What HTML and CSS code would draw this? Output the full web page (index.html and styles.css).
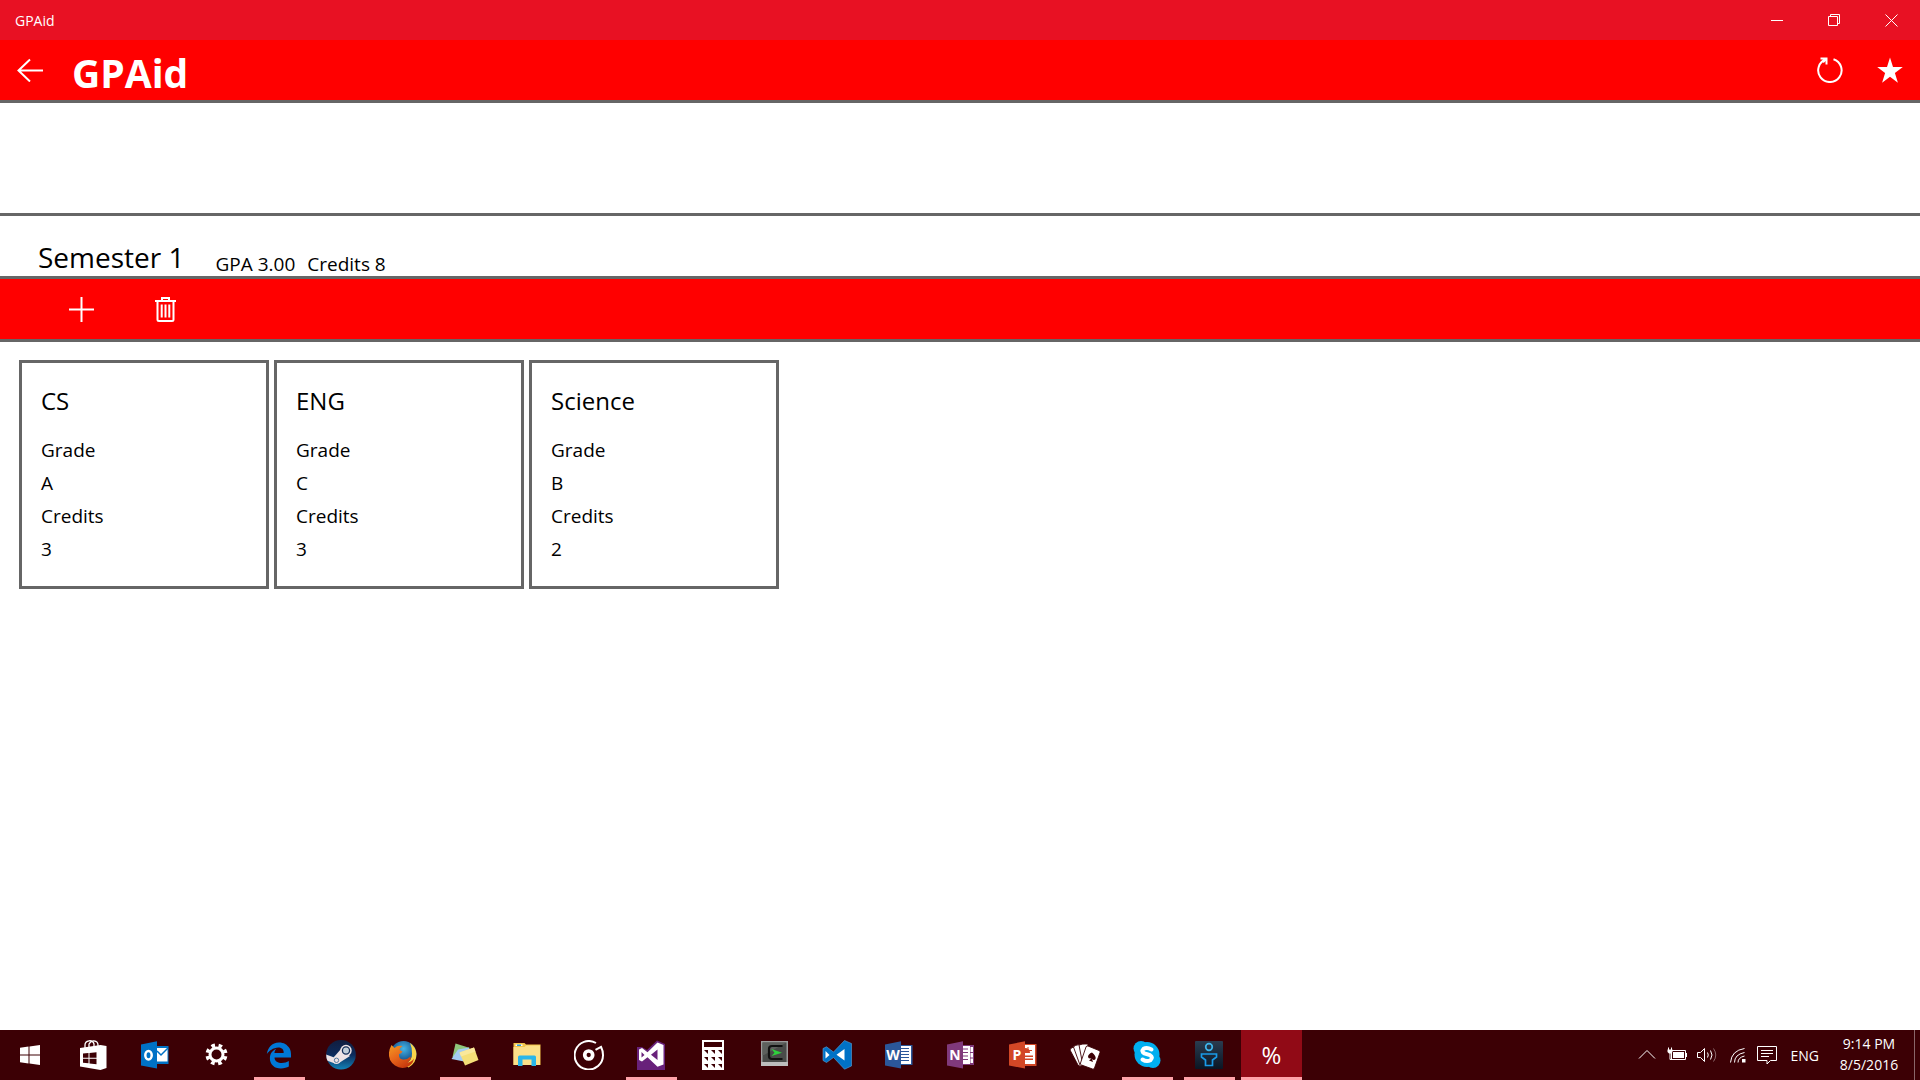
FILE: index.html
```html
<!DOCTYPE html>
<html lang="en">
<head>
  <meta charset="UTF-8">
  <title>GPAid</title>
  <link rel="stylesheet" href="styles.css">
</head>
<body>

  <div class="titlebar">
    <span class="titlebar-name">GPAid</span>
    <div class="window-buttons">
      <button type="button" aria-label="Minimize">
        <svg width="13" height="13" viewBox="0 0 13 13"><path d="M0 6.5h12"/></svg>
      </button>
      <button type="button" aria-label="Restore">
        <svg width="13" height="13" viewBox="0 0 13 13"><path d="M.5 2.5h9v9h-9zM2.500 2.500v-2h9v9h-2"/></svg>
      </button>
      <button type="button" aria-label="Close">
        <svg width="13" height="13" viewBox="0 0 13 13"><path d="M.5.5l12 12M12.500.5l-12 12"/></svg>
      </button>
    </div>
  </div>

  <header class="header">
    <button type="button" class="header-button" aria-label="Back">
      <svg width="26" height="24" viewBox="0 0 26 24"><path d="M26 12.500H1.500M13 1.500L1.500 12.500 13 23.500"/></svg>
    </button>
    <h1>GPAid</h1>
    <button type="button" class="header-button" aria-label="Refresh">
      <svg width="26" height="26" viewBox="0 0 26 26"><path d="M16.500 2.200A11.700 11.700 0 1 1 9 2.300M3.500 1.500h6v6"/><path d="M9.300 1.700L6 5.200"/></svg>
    </button>
    <button type="button" class="header-button" aria-label="Rate">
      <svg width="26" height="26" viewBox="0 0 26 26"><path class="solid" d="M13 .5l3 9.500h9.800l-7.900 5.900 3 9.800-7.900-6-7.900 6 3-9.800L.2 10H10z"/></svg>
    </button>
  </header>

  <main class="content">
    <div class="banner"></div>

    <div class="semester">
      <h2>Semester 1</h2>
      <span class="semester-gpa">GPA 3.00</span>
      <span>Credits 8</span>
    </div>

    <div class="toolbar">
      <button type="button" aria-label="Add course">
        <svg width="25" height="25" viewBox="0 0 25 25"><path d="M12.500 0v25M0 12.500h25"/></svg>
      </button>
      <button type="button" aria-label="Delete semester">
        <svg width="21" height="25" viewBox="0 0 21 25"><path d="M0 4h21M7 4V1h7v3M2.500 4v18.500q0 1.500 1.500 1.500h13q1.500 0 1.500-1.500V4M6.700 7.500v13M10.500 7.500v13M14.300 7.500v13"/></svg>
      </button>
    </div>

    <ul class="courses">
      <li class="course">
        <h3>CS</h3>
        <dl>
          <dt>Grade</dt>
          <dd>A</dd>
          <dt>Credits</dt>
          <dd>3</dd>
        </dl>
      </li>
      <li class="course">
        <h3>ENG</h3>
        <dl>
          <dt>Grade</dt>
          <dd>C</dd>
          <dt>Credits</dt>
          <dd>3</dd>
        </dl>
      </li>
      <li class="course">
        <h3>Science</h3>
        <dl>
          <dt>Grade</dt>
          <dd>B</dd>
          <dt>Credits</dt>
          <dd>2</dd>
        </dl>
      </li>
    </ul>
  </main>

  <footer class="taskbar">
    <div class="apps">
      <button type="button" class="start" aria-label="Start">
        <svg width="30" height="30" viewBox="0 0 30 30"><path fill="#fff" d="M4 7.800l8.500-1.200v7.900H4zM13.500 6.500L24 5v9.500H13.500zM4 15.500h8.500v8L4 22.300zM13.500 15.500H24V25l-10.500-1.400z"/></svg>
      </button>

      <button type="button" aria-label="Store">
        <svg viewBox="0 0 31 30">
          <path fill="none" stroke="#fff" stroke-width="1.300" d="M7 8V5Q7 1.500 11 .8q4-.5 5 3.200v3M11 7V4Q13 .5 16 .8q4 .5 4 4.200v2"/>
          <path fill="#fff" d="M2 8l20.500-3L28.500 6v22l-6 2L2 26.500z"/>
          <path fill="#3c0005" d="M5 13.500l5.500-.5v4.700H5zM11.500 12.900l7-.7v5.500h-7zM5 18.700h5.500v4.600L5 22.800zM11.500 18.700h7v5.500l-7-.7z"/>
        </svg>
      </button>

      <button type="button" aria-label="Outlook">
        <svg viewBox="0 0 31 30">
          <path fill="#0072c6" d="M17 6h11.500v18H17z"/>
          <path fill="#fff" d="M17 8h10.500v13.500H17z"/>
          <path fill="none" stroke="#0072c6" stroke-width="1.500" d="M17 11l4 4 7-7"/>
          <path fill="#0072c6" d="M1 4.500l16-3.200v27.200L1 25.500z"/>
          <ellipse cx="8.500" cy="15.300" rx="3.200" ry="4.300" fill="none" stroke="#fff" stroke-width="2.500"/>
        </svg>
      </button>

      <button type="button" aria-label="Settings">
        <svg viewBox="0 0 31 30">
          <g fill="none" stroke="#fff">
            <circle cx="14.500" cy="14.500" r="6.500" stroke-width="3"/>
            <circle cx="14.500" cy="14.500" r="9.300" stroke-width="3.500" stroke-dasharray="3.652 3.652" stroke-dashoffset="5.478"/>
          </g>
        </svg>
      </button>

      <button type="button" class="open" aria-label="Edge">
        <svg viewBox="0 0 31 30">
          <path fill="#0078d7" transform="translate(1.500 2) scale(.0525)" d="M486.286 243.671c0-44.032-7.754-84.465-28.801-122.405C416.498 47.879 343.912 8.001 258.893 8.001 118.962 7.724 40.617 113.214 26.056 227.679c42.429-61.312 117.073-121.376 220.375-124.966 0 0 109.666 0 99.419 104.957H169.997c6.369-37.386 18.554-58.986 34.339-78.915-75.048 34.893-121.850 96.096-120.742 188.315.83 71.448 50.124 144.836 120.743 171.976 83.357 31.847 192.776 7.200 240.132-21.324V363.307c-80.864 56.494-270.871 60.925-272.255-67.572h314.073v-52.064z"/>
        </svg>
      </button>

      <button type="button" aria-label="Steam">
        <svg viewBox="0 0 31 30">
          <defs>
            <linearGradient id="steam" x2="0" y2="1"><stop offset="0" stop-color="#111d3e"/><stop offset=".5" stop-color="#0d2b5c"/><stop offset="1" stop-color="#1284b8"/></linearGradient>
            <clipPath id="steamClip"><circle cx="15" cy="14.800" r="14.800"/></clipPath>
          </defs>
          <circle cx="15" cy="14.800" r="14.800" fill="url(#steam)"/>
          <g clip-path="url(#steamClip)">
            <path stroke="#eee3e5" stroke-width="5.500" fill="none" d="M-1 17l11 4"/>
            <path fill="#eee3e5" d="M8 17l7-8 9 7-11 7z"/>
            <circle cx="10.500" cy="20.300" r="3.800" fill="#eee3e5"/>
            <circle cx="10.500" cy="20.300" r="2.200" fill="none" stroke="#567ca0"/>
            <circle cx="20" cy="10.500" r="5.700" fill="#eee3e5"/>
            <circle cx="20" cy="10.500" r="3.600" fill="#c2ced9" stroke="#142f59" stroke-width="1.300"/>
          </g>
        </svg>
      </button>

      <button type="button" aria-label="Firefox">
        <svg viewBox="0 0 31 30">
          <defs>
            <radialGradient id="globe" cx=".5" cy=".3"><stop offset="0" stop-color="#45b6e8"/><stop offset="1" stop-color="#124b87"/></radialGradient>
            <linearGradient id="fox" x2=".7" y2="1"><stop offset="0" stop-color="#f29b22"/><stop offset=".5" stop-color="#e8661b"/><stop offset="1" stop-color="#c4350c"/></linearGradient>
          </defs>
          <circle cx="15.500" cy="14" r="13" fill="url(#globe)"/>
          <path fill="#f9d54a" d="M22 3q6 4 6.500 11 0 9-8 13.500l-5-3q9-3 8.500-11Q24 7 22 3z"/>
          <path fill="url(#fox)" d="M3.500 5l3 3q3-3 8-2-3 2-3 4l3 1.500q-1 2-3.500 2.500-.5 5 4 5.500 4 .5 7.500-3 1 4-3.500 6 4 0 7-4-1 6.500-8 9-6 1.500-11-2-7-5-6-13 .5-4 2.500-7.500z"/>
        </svg>
      </button>

      <button type="button" class="open" aria-label="Sticky Notes">
        <svg viewBox="0 0 31 30">
          <path fill="#8fc67c" d="M5.500 3.500L20 8l-9 12-8.500-3z"/>
          <path fill="#a4ccf2" d="M8 9.500l11-2v15L1.500 19z"/>
          <path fill="#f5df78" d="M9.500 12.500l14.500-5 4.500 12.500-13.500 5.500z"/>
          <path fill="#fae89b" d="M9.500 12.500l14.500-5 1.500 4-14.500 5z"/>
        </svg>
      </button>

      <button type="button" aria-label="File Explorer">
        <svg viewBox="0 0 31 30">
          <path fill="#f2c54a" d="M1.500 3h11l1.500 1.500h14.500V25h-27z"/>
          <path fill="#fff" d="M3.500 4.500h7V6h-7z"/>
          <path fill="#29a5de" d="M5 4.500h4V6H5z"/>
          <path fill="#fbe08a" d="M1.500 7h11L14 5.500h14V25h-26.500z"/>
          <path fill="#29b6ea" d="M6 26V17q0-1.500 1.500-1.500h15q1.500 0 1.500 1.500v9h-4.500v-6.500h-9V26z"/>
        </svg>
      </button>

      <button type="button" aria-label="Groove Music">
        <svg viewBox="0 0 31 30">
          <g fill="none" stroke="#fff">
            <path stroke-width="2" d="M21.500 9.800l5.500-3q2 4 2 8.200A14.200 14.200 0 1 1 22 3"/>
            <circle cx="14.700" cy="15" r="4" stroke-width="3.700"/>
          </g>
        </svg>
      </button>

      <button type="button" class="open" aria-label="Visual Studio">
        <svg viewBox="0 0 31 30">
          <path fill="#68217a" d="M1 7h5l5 3L21 .5 29 4v26H1z"/>
          <path fill="#fff" fill-rule="evenodd" d="M3 9.500l3-1.500 5.500 4.200L21.500 2.500l6 2.500v19.500l-6 2.300-10-9.600L6 21.500 3 20zM5.500 12v5.500L8.500 15zM21.500 9.500L15 14.700l6.500 5.200z"/>
        </svg>
      </button>

      <button type="button" aria-label="Calculator">
        <svg viewBox="0 0 31 30">
          <path fill="#fff" d="M4 0h22v30H4z"/>
          <path fill="#3c0005" d="M6 2h18v5H6zM6 10h4v4zM13 10h4v4zM20 10h4v4zM6 17h4v4zM13 17h4v4zM20 17h4v4zM6 24h4v4zM13 24h4v4zM20 24h4v4z"/>
        </svg>
      </button>

      <button type="button" aria-label="Cmder">
        <svg viewBox="0 0 31 30">
          <path fill="#9b9b9b" d="M1 1h27v25H1z"/>
          <path fill="#bdbdbd" d="M1 22h27v4H1z"/>
          <path fill="#494b49" d="M2.500 2.500h24V22h-24z"/>
          <path fill="#5d605d" d="M2.500 2.500h24L4 15H2.500z"/>
          <path fill="none" stroke="#111" stroke-width="2.200" d="M22.500 6H12Q9 6 9 9v7q0 3 3 3h10.500"/>
          <path fill="#2ed13c" d="M11.500 9l10.500 3.800-10.500 3.200 3-3.200z"/>
        </svg>
      </button>

      <button type="button" aria-label="Visual Studio Code">
        <svg viewBox="0 0 31 30">
          <path fill="#0072c6" stroke="#5aa1d9" stroke-width=".6" d="M1 8.500L4.500 6.800l7 5.200L22.500.5l7 3v22.500l-7 3.200-11-11.700-7 5L1 20.500z"/>
          <path fill="#fff" d="M3.500 11v7.500L7.500 15zM22.500 9v11.500l-8-5.700z"/>
        </svg>
      </button>

      <button type="button" aria-label="Word">
        <svg viewBox="0 0 31 30">
          <path fill="#2b579a" d="M17 5h11.500v20H17z"/>
          <path fill="#fff" d="M17 6h10v18H17z"/>
          <path stroke="#2b579a" stroke-width="1.200" d="M17 8.500h8M17 11.500h8M17 14.500h8M17 17.500h8M17 20.500h8"/>
          <path fill="#2b579a" d="M1 4.500l16-3.200v27.200L1 25.500z"/>
          <text x="9" y="20" class="letter">W</text>
        </svg>
      </button>

      <button type="button" aria-label="OneNote">
        <svg viewBox="0 0 31 30">
          <path fill="#80397b" d="M17 5h11v20H17z"/>
          <path fill="#fff" d="M17 6h7v18h-7zM24.500 7h2.500v5h-2.500zM24.500 13h2.500v4.500h-2.500zM24.500 18.500h2.500V23h-2.500z"/>
          <path stroke="#80397b" stroke-width="1.200" d="M17 9h5M17 12.500h5M17 16h5M17 19.500h5"/>
          <path fill="#80397b" d="M1 4.500l16-3.200v27.200L1 25.500z"/>
          <text x="9" y="20" class="letter">N</text>
        </svg>
      </button>

      <button type="button" aria-label="PowerPoint">
        <svg viewBox="0 0 31 30">
          <path fill="#d24726" d="M17 4h11.500v22H17z"/>
          <path fill="#fff" d="M17 5h10v19H17z"/>
          <path fill="#d24726" d="M17 8q5 0 5 5h-5zM17 15.500h8V17h-8zM17 18.500h8V20h-8z"/>
          <path fill="none" stroke="#d24726" d="M20 7v3.500h4"/>
          <path fill="#d24726" d="M1 4.500l16-3.200v27.200L1 25.500z"/>
          <text x="9" y="20" class="letter">P</text>
        </svg>
      </button>

      <button type="button" aria-label="Solitaire">
        <svg viewBox="0 0 31 30">
          <g fill="#fff" stroke="#3c0005" stroke-width=".9">
            <path d="M0 10q0-2 4.500-3.500L13 24l-3 2q-1 .5-2-1z"/>
            <path d="M3.500 7q1-2 6-2.500l5 19-4 3z"/>
            <path d="M9 5q3-1.500 9-1l-1 20-4 2z"/>
            <path d="M18 6l11 4.500q1.500.5 1 2l-5.500 15.500q-.5 1.500-2 1l-11-4q-1.500-.5-1-2L16 7q.5-1.500 2-1z"/>
          </g>
          <path fill="#3c0005" d="M22 12.500q4.500 3.500 3.500 6.500-1.500 2-3.500 0l1 3-4-1.500 2.500-2q-3 .5-3.500-1.500 0-3 4-4.500z"/>
        </svg>
      </button>

      <button type="button" class="open" aria-label="Skype">
        <svg viewBox="0 0 31 30">
          <g fill="#00aff0">
            <circle cx="15" cy="14.500" r="12.500"/>
            <circle cx="9" cy="8.500" r="7.500"/>
            <circle cx="21" cy="20.500" r="7.500"/>
          </g>
          <path fill="none" stroke="#fff" stroke-width="4" stroke-linecap="round" d="M19.500 9.500Q15 7 11.500 8.800q-2.500 2.500 1 4.700l5.500 1.700q3.500 2 .5 5-4 2-8-.7"/>
        </svg>
      </button>

      <button type="button" class="open" aria-label="Fitness">
        <svg viewBox="0 0 31 30">
          <defs><linearGradient id="fit" x2="0" y2="1"><stop offset="0" stop-color="#2a3c50"/><stop offset="1" stop-color="#0b1624"/></linearGradient></defs>
          <rect x="1" y="1" width="28" height="28" rx="1" fill="url(#fit)"/>
          <g fill="none" stroke="#1a9be8" stroke-width="1.700">
            <circle cx="15" cy="7" r="3.300" stroke="#3fb4ea"/>
            <path d="M7.500 14h15v3l-4 3v5.500h-7V20l-4-3z"/>
          </g>
        </svg>
      </button>

      <button type="button" class="open active" aria-label="GPAid">%</button>
    </div>

    <div class="tray">
      <svg viewBox="0 0 20 20"><path d="M2 13.500l8-8 8 8"/></svg>
      <svg viewBox="0 0 20 20"><path d="M4.500 5.500h14v9h-14z"/><path class="solid" d="M6 7h11v6H6zM19 8h1v4h-1z"/><path d="M1.500 2.500v3M4.500 2.500v3M3 8v6.500h2"/><path class="solid" d="M.5 4.500h5v2.500l-1.500 1.500h-2L.5 7z"/></svg>
      <svg viewBox="0 0 20 20"><path d="M.5 7.500h3l4-4v13l-4-4h-3zM10.500 7.500q1.500 2.500 0 5M13.500 5.500q3 4.500 0 9"/><path opacity=".4" d="M16.500 3.500q4.500 6.500 0 13"/></svg>
      <svg viewBox="0 0 20 20"><path d="M3.500 17.500Q4.500 5.500 17.500 3.500M7.500 17.500q0-8 10-10M11 17.500q0-5 6.500-6.500"/><path class="solid" d="M15 14h3.500v3.500H15z"/></svg>
      <svg viewBox="0 0 20 20"><path d="M.5 1.500h19v14h-6l-3.500 3.500v-3.500H.5zM4 5.500h12M4 8.500h12M4 11.500h8"/></svg>
      <span class="lang">ENG</span>
      <div class="clock">9:14 PM<br>8/5/2016</div>
      <button type="button" class="show-desktop" aria-label="Show desktop"></button>
    </div>
  </footer>

</body>
</html>
```
FILE: styles.css
```css
* {
  box-sizing: border-box;
}

body {
  margin: 0;
  min-height: 100vh;
  display: flex;
  flex-direction: column;
  background-color: #fff;
  color: #000;
  font-family: 'Open Sans', 'Noto Sans', sans-serif;
  font-size: 19px;
}

h1, h2, h3, ul, dl, dd {
  margin: 0;
  padding: 0;
  font-weight: normal;
}

button {
  padding: 0;
  border: none;
  background: none;
  color: white;
  font-family: inherit;
  display: flex;
  align-items: center;
  justify-content: center;
}

/* window title bar */
.titlebar {
  height: 40px;
  padding-left: 15px;
  display: flex;
  align-items: center;
  justify-content: space-between;
  background-color: #e81123;
  color: white;
  font-size: 14px;
}

.window-buttons {
  display: flex;
  height: 100%;
}

.window-buttons button {
  width: 57px;
}

.window-buttons svg,
.header svg,
.toolbar svg,
.tray svg {
  fill: none;
  stroke: #fff;
  stroke-width: 1;
}

/* app header */
.header {
  height: 63px;
  display: flex;
  background-color: #f00;
  border-bottom: 3px solid #666;
  color: white;
}

.header h1 {
  flex: 1;
  padding: 8px 0 0 12px;
  font-size: 39px;
  font-weight: bold;
  line-height: 50px;
}

.header-button {
  width: 60px;
}

.header svg,
.toolbar svg {
  stroke-width: 2;
}

.header .solid,
.tray .solid {
  fill: #fff;
  stroke: none;
}

/* content */
.content {
  flex: 1;
}

.banner {
  height: 113px;
  border-bottom: 3px solid #666;
}

.semester {
  height: 63px;
  padding-left: 38px;
  display: flex;
  align-items: flex-end;
  border-bottom: 3px solid #666;
  line-height: 24px;
}

.semester h2 {
  font-size: 28px;
  line-height: 38px;
}

.semester-gpa {
  margin: 0 12px 0 31px;
}

.toolbar {
  height: 63px;
  padding-left: 39px;
  display: flex;
  background-color: #f00;
  border-bottom: 3px solid #666;
}

.toolbar button {
  width: 84px;
}

.courses {
  display: flex;
  flex-wrap: wrap;
  gap: 5px;
  padding: 18px 19px;
  list-style: none;
}

.course {
  width: 250px;
  padding: 22px 19px 20px;
  border: 3px solid #666;
}

.course h3 {
  margin-bottom: 17px;
  font-size: 24px;
  line-height: 32px;
}

.course dl {
  line-height: 33px;
}

/* taskbar */
.taskbar {
  height: 50px;
  display: flex;
  justify-content: space-between;
  background-color: #3c0005;
  color: white;
}

.apps {
  display: flex;
  gap: 1px;
}

.apps button {
  width: 61px;
  position: relative;
}

.apps .start {
  width: 62px;
}

.apps svg {
  width: 31px;
  height: 30px;
}

.apps .start svg {
  width: 30px;
}

.apps .open::after {
  content: '';
  position: absolute;
  left: 5px;
  right: 5px;
  bottom: 0;
  height: 3px;
  background-color: #ffa3aa;
}

.apps .active {
  padding-bottom: 2px;
  background-color: #910a16;
  font-size: 24px;
}

.apps .active::after {
  left: 0;
  right: 0;
}

.letter {
  fill: #fff;
  font-size: 14px;
  font-weight: bold;
  text-anchor: middle;
}

.tray {
  display: flex;
  align-items: center;
  gap: 10px;
  font-size: 14px;
}

.tray svg {
  width: 20px;
  height: 20px;
}

.lang {
  margin-left: 4px;
}

.clock {
  width: 80px;
  padding-bottom: 2px;
  text-align: center;
  line-height: 21px;
}

.show-desktop {
  width: 6px;
  margin-left: -5px;
  align-self: stretch;
  border-left: 1px solid #8a6669;
}
```
